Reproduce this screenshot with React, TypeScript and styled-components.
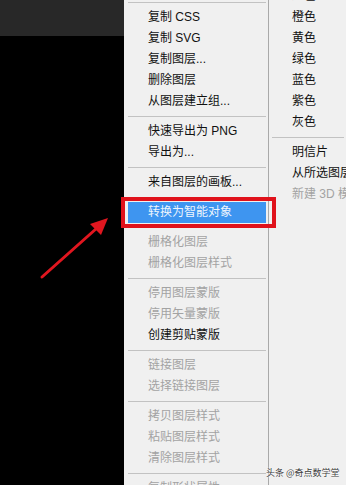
import { FC } from "react";
import styled, { createGlobalStyle } from "styled-components";

const GlobalStyle = createGlobalStyle`
  html, body {
    margin: 0;
    padding: 0;
    background: #000;
  }
  body {
    font-family: "Liberation Sans", "Noto Sans CJK SC", sans-serif;
  }
`;

type Entry =
  | { kind: "sep" }
  | { kind: "item"; label: string; disabled?: boolean; active?: boolean };

const sep: Entry = { kind: "sep" };
const item = (label: string, disabled = false, active = false): Entry => ({
  kind: "item",
  label,
  disabled,
  active,
});

const layerMenu: Entry[] = [
  sep,
  item("复制 CSS"),
  item("复制 SVG"),
  item("复制图层..."),
  item("删除图层"),
  item("从图层建立组..."),
  sep,
  item("快速导出为 PNG"),
  item("导出为..."),
  sep,
  item("来自图层的画板..."),
  sep,
  item("转换为智能对象", false, true),
  sep,
  item("栅格化图层", true),
  item("栅格化图层样式", true),
  sep,
  item("停用图层蒙版", true),
  item("停用矢量蒙版", true),
  item("创建剪贴蒙版"),
  sep,
  item("链接图层", true),
  item("选择链接图层", true),
  sep,
  item("拷贝图层样式", true),
  item("粘贴图层样式", true),
  item("清除图层样式", true),
  sep,
  item("复制形状属性", true),
];

const colorMenu: Entry[] = [
  item("红色"),
  item("橙色"),
  item("黄色"),
  item("绿色"),
  item("蓝色"),
  item("紫色"),
  item("灰色"),
  sep,
  item("明信片"),
  item("从所选图层新建 3D 模型"),
  item("新建 3D 模型", true),
];

const Page = styled.div`
  position: relative;
  display: flex;
  width: 346px;
  height: 485px;
  overflow: hidden;
`;

const Canvas = styled.div`
  display: flex;
  flex-direction: column;
  width: 124px;
  flex-shrink: 0;
`;

const OptionsStrip = styled.div`
  height: 36px;
  background: #282828;
`;

const Stage = styled.div`
  flex: 1;
  background: #000;
`;

interface IPanel {
  $offset: number;
  $bordered?: boolean;
}
const MenuPanel = styled.div<IPanel>`
  display: flex;
  flex-direction: column;
  background: #f0f0f0;
  overflow: hidden;
  ${({ $bordered }) =>
    $bordered
      ? `width: 144px; flex-shrink: 0; border-right: 1px solid #a9a9a9;`
      : `flex: 1;`}

  > div {
    margin-top: ${({ $offset }) => $offset}px;
  }
`;

const MenuList = styled.div`
  display: flex;
  flex-direction: column;
`;

interface IRow {
  $disabled?: boolean;
  $active?: boolean;
  $inset: number;
}
const MenuRow = styled.div<IRow>`
  height: 21px;
  line-height: 21px;
  flex-shrink: 0;
  margin: 0 2px 0 ${({ $inset }) => $inset}px;
  padding-left: 20px;
  font-size: 12px;
  white-space: nowrap;
  color: ${({ $disabled, $active }) =>
    $active ? "#eef5fd" : $disabled ? "#a3a3a3" : "#111"};
  background: ${({ $active }) => ($active ? "#3e95f0" : "transparent")};
`;

const Separator = styled.div<{ $inset: number }>`
  height: 9px;
  flex-shrink: 0;
  display: flex;
  align-items: center;
  margin: 0 2px 0 ${({ $inset }) => $inset}px;

  &::after {
    content: "";
    flex: 1;
    height: 1px;
    background: #c2c2c2;
  }
`;

const Callout = styled.div`
  position: absolute;
  left: 121px;
  top: 197px;
  width: 155px;
  height: 31px;
  box-sizing: border-box;
  border: 4px solid #e0121b;
`;

const ArrowLayer = styled.svg`
  position: absolute;
  left: 0;
  top: 0;
  pointer-events: none;
`;

const Watermark = styled.div`
  position: absolute;
  left: 266px;
  top: 466px;
  font-family: "Noto Sans CJK SC", sans-serif;
  font-size: 9px;
  line-height: 14px;
  color: #3c3c3c;
  text-shadow: 0 0 2px #fff, 0 0 2px #fff;
  white-space: nowrap;
`;

interface IMenu {
  entries: Entry[];
  inset: number;
}
const Menu: FC<IMenu> = ({ entries, inset }) => (
  <MenuList>
    {entries.map((entry, i) =>
      entry.kind === "sep" ? (
        <Separator key={"sep-" + i} $inset={inset} />
      ) : (
        <MenuRow
          key={entry.label}
          $inset={inset}
          $disabled={entry.disabled}
          $active={entry.active}
        >
          {entry.label}
        </MenuRow>
      )
    )}
  </MenuList>
);

export default function App() {
  return (
    <>
      <GlobalStyle />
      <Page>
        <Canvas>
          <OptionsStrip />
          <Stage />
        </Canvas>
        <MenuPanel $offset={-2} $bordered>
          <Menu entries={layerMenu} inset={4} />
        </MenuPanel>
        <MenuPanel $offset={-14}>
          <Menu entries={colorMenu} inset={3} />
        </MenuPanel>

        <Callout />
        <ArrowLayer width="124" height="485" viewBox="0 0 124 485">
          <line
            x1="42"
            y1="277"
            x2="97"
            y2="228"
            stroke="#e0161f"
            strokeWidth="3"
            strokeLinecap="round"
          />
          <polygon points="108,218 101,235 90,224" fill="#e0161f" />
        </ArrowLayer>
        <Watermark>头条 @奇点数学堂</Watermark>
      </Page>
    </>
  );
}
